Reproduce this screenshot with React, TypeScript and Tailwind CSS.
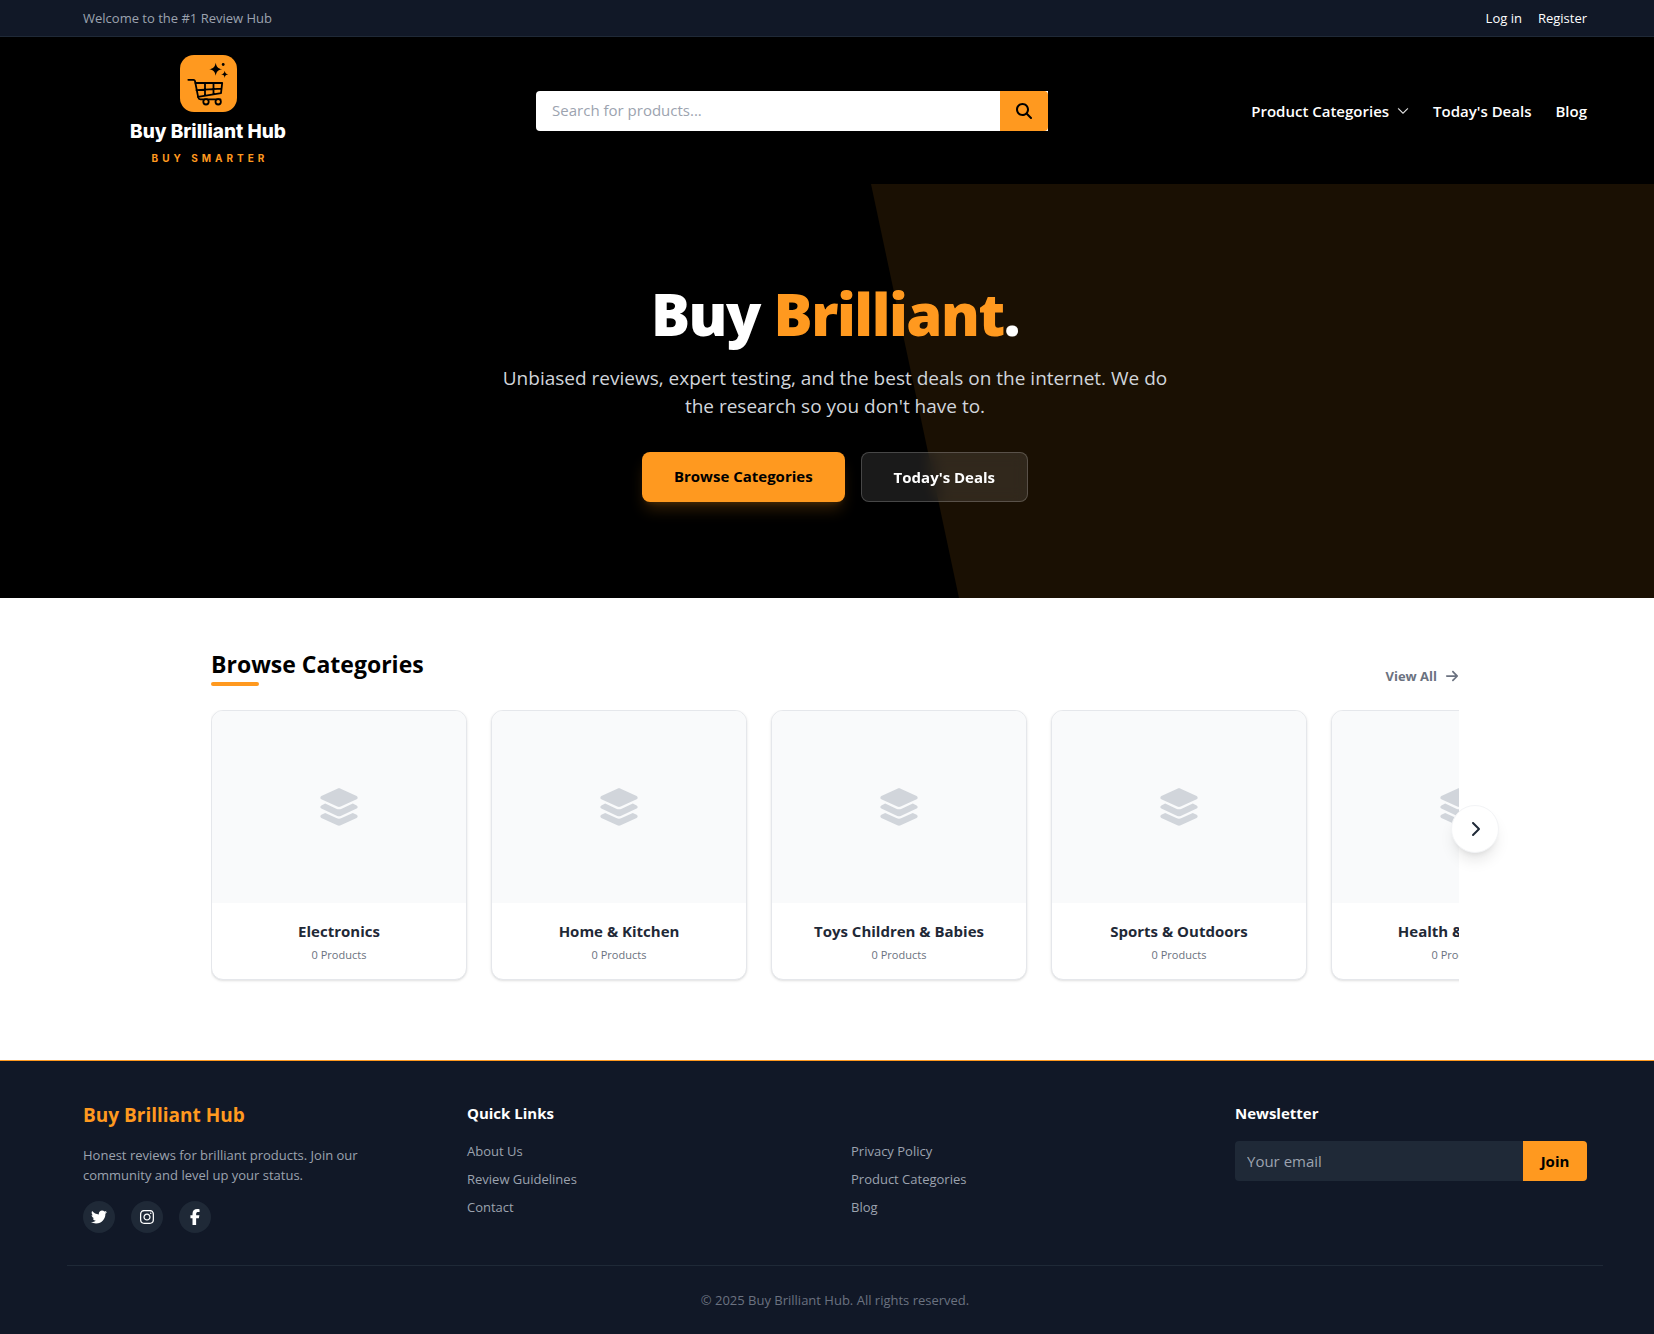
import { BsChevronDown } from "react-icons/bs";
import {
  FaArrowRight,
  FaChevronRight,
  FaFacebookF,
  FaInstagram,
  FaLayerGroup,
  FaMagnifyingGlass,
  FaTwitter,
} from "react-icons/fa6";

const categories = [
  { name: "Electronics", count: 0 },
  { name: "Home & Kitchen", count: 0 },
  { name: "Toys Children & Babies", count: 0 },
  { name: "Sports & Outdoors", count: 0 },
  { name: "Health & Beauty", count: 0 },
];

const quickLinks = [
  "About Us",
  "Privacy Policy",
  "Review Guidelines",
  "Product Categories",
  "Contact",
  "Blog",
];

const socials = [
  { name: "Twitter", Icon: FaTwitter },
  { name: "Instagram", Icon: FaInstagram },
  { name: "Facebook", Icon: FaFacebookF },
];

function Logo() {
  return (
    <a
      href="#"
      className="flex w-[250px] shrink-0 flex-col items-center py-0.5 font-['Inter',sans-serif]"
    >
      <svg viewBox="0 0 57 57" className="size-[57px]" fill="none">
        <rect width="57" height="57" rx="14" fill="#ff991f" />
        <g
          stroke="#000"
          strokeWidth="1.8"
          strokeLinecap="round"
          strokeLinejoin="round"
        >
          <path d="M8.3 24.8h5.2c.8 0 1.3.4 1.5 1.2l3.2 16.4c.3 1.3 1 1.9 2.2 1.9H40.5" />
          <path d="M15.5 28H42.2l-1.2 10.2-23 3.6M16.5 35.2l25-1.6M25 28v12.4M33.5 28v11.2" />
          <circle cx="26" cy="46.8" r="2.7" fill="#ff991f" />
          <circle cx="38.2" cy="46.8" r="2.7" fill="#ff991f" />
        </g>
        <g fill="#000">
          <path d="M35.7 7.8c.9 4.4 2.1 5.6 6.5 6.5-4.4.9-5.6 2.1-6.5 6.5-.9-4.4-2.1-5.6-6.5-6.5 4.4-.9 5.6-2.1 6.5-6.5z" />
          <path d="M44.7 15.7c.5 2.5 1.1 3.1 3.6 3.6-2.5.5-3.1 1.1-3.6 3.6-.5-2.5-1.1-3.1-3.6-3.6 2.5-.5 3.1-1.1 3.6-3.6z" />
          <circle cx="43.2" cy="9.5" r="1.4" />
        </g>
      </svg>
      <span className="mt-1.5 text-[19px] leading-7 font-extrabold text-white">
        Buy Brilliant Hub
      </span>
      <span className="mt-1 pl-1 text-[10px] leading-4 font-bold tracking-[4px] text-[#ff991f]">
        BUY SMARTER
      </span>
    </a>
  );
}

function Header() {
  return (
    <header>
      <div className="border-b border-[#1f2937] bg-[#111827] pl-4 text-[13px] leading-5">
        <div className="mx-auto flex max-w-[1536px] justify-between px-4 py-2">
          <span className="text-[#9ca3af]">Welcome to the #1 Review Hub</span>
          <div className="flex gap-4 text-white">
            <a href="#">Log in</a>
            <a href="#">Register</a>
          </div>
        </div>
      </div>
      <div className="bg-black pl-4">
        <div className="mx-auto flex max-w-[1536px] items-center px-4 py-4">
          <Logo />
          <div className="flex-1 px-8">
            <form className="mx-auto flex h-10 max-w-lg rounded-l bg-white">
              <input
                type="text"
                aria-label="Search for products"
                placeholder="Search for products..."
                className="min-w-0 flex-1 px-4 text-[15px] outline-none placeholder:text-[#9ca3af]"
              />
              <button
                type="button"
                aria-label="Search"
                className="flex w-12 items-center justify-center rounded-r bg-[#ff991f]"
              >
                <FaMagnifyingGlass className="size-4" />
              </button>
            </form>
          </div>
          <nav className="flex items-center gap-6 text-[15px] leading-6 font-semibold text-white">
            <button type="button" className="flex items-center gap-2">
              Product Categories
              <BsChevronDown className="size-3 stroke-[0.5]" />
            </button>
            <a href="#">Today's Deals</a>
            <a href="#">Blog</a>
          </nav>
        </div>
      </div>
    </header>
  );
}

function Hero() {
  return (
    <section className="relative overflow-hidden bg-black pl-4">
      <div className="absolute inset-y-0 left-1/2 w-3/4 translate-x-22 skew-x-12 bg-[#ff991f]/10" />
      <div className="relative flex flex-col items-center py-24 text-center">
        <h1 className="text-[58px] leading-17 font-black tracking-tight text-white">
          Buy <span className="text-[#ff991f]">Brilliant</span>.
        </h1>
        <p className="mt-4 max-w-2xl text-[19px] leading-7 text-[#d1d5db]">
          Unbiased reviews, expert testing, and the best deals on the internet.
          We do the research so you don't have to.
        </p>
        <div className="mt-8 flex gap-4 text-[15px] leading-6 font-bold">
          <a
            href="#categories"
            className="rounded-lg bg-[#ff991f] px-8 py-3 text-black shadow-lg shadow-[#ff991f]/20"
          >
            Browse Categories
          </a>
          <a
            href="#"
            className="rounded-lg border border-white/20 bg-white/10 px-8 py-3 text-white backdrop-blur-sm"
          >
            Today's Deals
          </a>
        </div>
      </div>
    </section>
  );
}

function CategoryCard({ name, count }: { name: string; count: number }) {
  return (
    <a
      href="#"
      className="w-64 shrink-0 overflow-hidden rounded-xl border border-[#e5e7eb] bg-white text-center shadow-sm"
    >
      <div className="flex h-48 items-center justify-center bg-[#f9fafb]">
        <FaLayerGroup className="h-10 w-[42px] text-[#d1d5db]" />
      </div>
      <div className="p-4">
        <h3 className="text-[15px] leading-6 font-bold text-[#1f2937]">
          {name}
        </h3>
        <p className="mt-1 text-[11px] leading-4 text-[#6b7280]">
          {count} Products
        </p>
      </div>
    </a>
  );
}

function Categories() {
  return (
    <section id="categories" className="bg-white py-12 pl-4">
      <div className="mx-auto max-w-7xl px-4">
        <div className="relative">
          <div className="mb-6 flex items-end justify-between">
            <div>
              <h2 className="text-[23px] leading-9 font-bold text-black">
                Browse Categories
              </h2>
              <div className="h-1 w-12 rounded-full bg-[#ff991f]" />
            </div>
            <a
              href="#"
              className="flex items-center gap-2 text-[13px] leading-5 font-bold text-[#6b7280]"
            >
              View All <FaArrowRight className="size-3.5" />
            </a>
          </div>
          <div className="flex gap-6 overflow-hidden pb-8">
            {categories.map((c) => (
              <CategoryCard key={c.name} name={c.name} count={c.count} />
            ))}
          </div>
          <button
            type="button"
            aria-label="Next categories"
            className="absolute top-1/2 -right-10 flex size-12 -translate-y-1/2 items-center justify-center rounded-full border border-[#f3f4f6] bg-white text-[#1f2937] shadow-lg"
          >
            <FaChevronRight className="size-4" />
          </button>
        </div>
      </div>
    </section>
  );
}

function Footer() {
  return (
    <footer className="border-t border-[#ff991f] bg-[#111827] pt-10 pl-4 text-[13px] leading-5 text-[#9ca3af]">
      <div className="mx-auto max-w-[1536px]">
        <div className="grid grid-cols-4 gap-8 px-4">
          <div>
            <h3 className="text-[19px] leading-7 font-bold text-[#ff991f]">
              Buy Brilliant Hub
            </h3>
            <p className="mt-4 max-w-[300px]">
              Honest reviews for brilliant products. Join our community and
              level up your status.
            </p>
            <div className="mt-4 flex gap-4">
              {socials.map(({ name, Icon }) => (
                <a
                  key={name}
                  href="#"
                  aria-label={name}
                  className="flex size-8 items-center justify-center rounded-full bg-[#1f2937] text-white"
                >
                  <Icon className="size-4" />
                </a>
              ))}
            </div>
          </div>
          <div className="col-span-2">
            <h4 className="text-[15px] leading-6 font-bold text-white">
              Quick Links
            </h4>
            <ul className="mt-4 grid grid-cols-2 gap-x-8 gap-y-2">
              {quickLinks.map((link) => (
                <li key={link}>
                  <a href="#">{link}</a>
                </li>
              ))}
            </ul>
          </div>
          <div className="text-[15px] leading-6">
            <h4 className="font-bold text-white">Newsletter</h4>
            <form className="mt-4 flex h-10">
              <input
                type="email"
                aria-label="Your email"
                placeholder="Your email"
                className="min-w-0 flex-1 rounded-l bg-[#1f2937] px-3 text-white outline-none placeholder:text-[#9ca3af]"
              />
              <button
                type="button"
                className="w-16 rounded-r bg-[#ff991f] font-bold text-black"
              >
                Join
              </button>
            </form>
          </div>
        </div>
        <div className="mt-8 border-t border-[#1f2937] py-6 text-center text-[#6b7280]">
          © 2025 Buy Brilliant Hub. All rights reserved.
        </div>
      </div>
    </footer>
  );
}

export default function App() {
  return (
    <div className="min-h-screen bg-white font-['Open_Sans','Noto_Sans',sans-serif]">
      <Header />
      <Hero />
      <Categories />
      <Footer />
    </div>
  );
}
